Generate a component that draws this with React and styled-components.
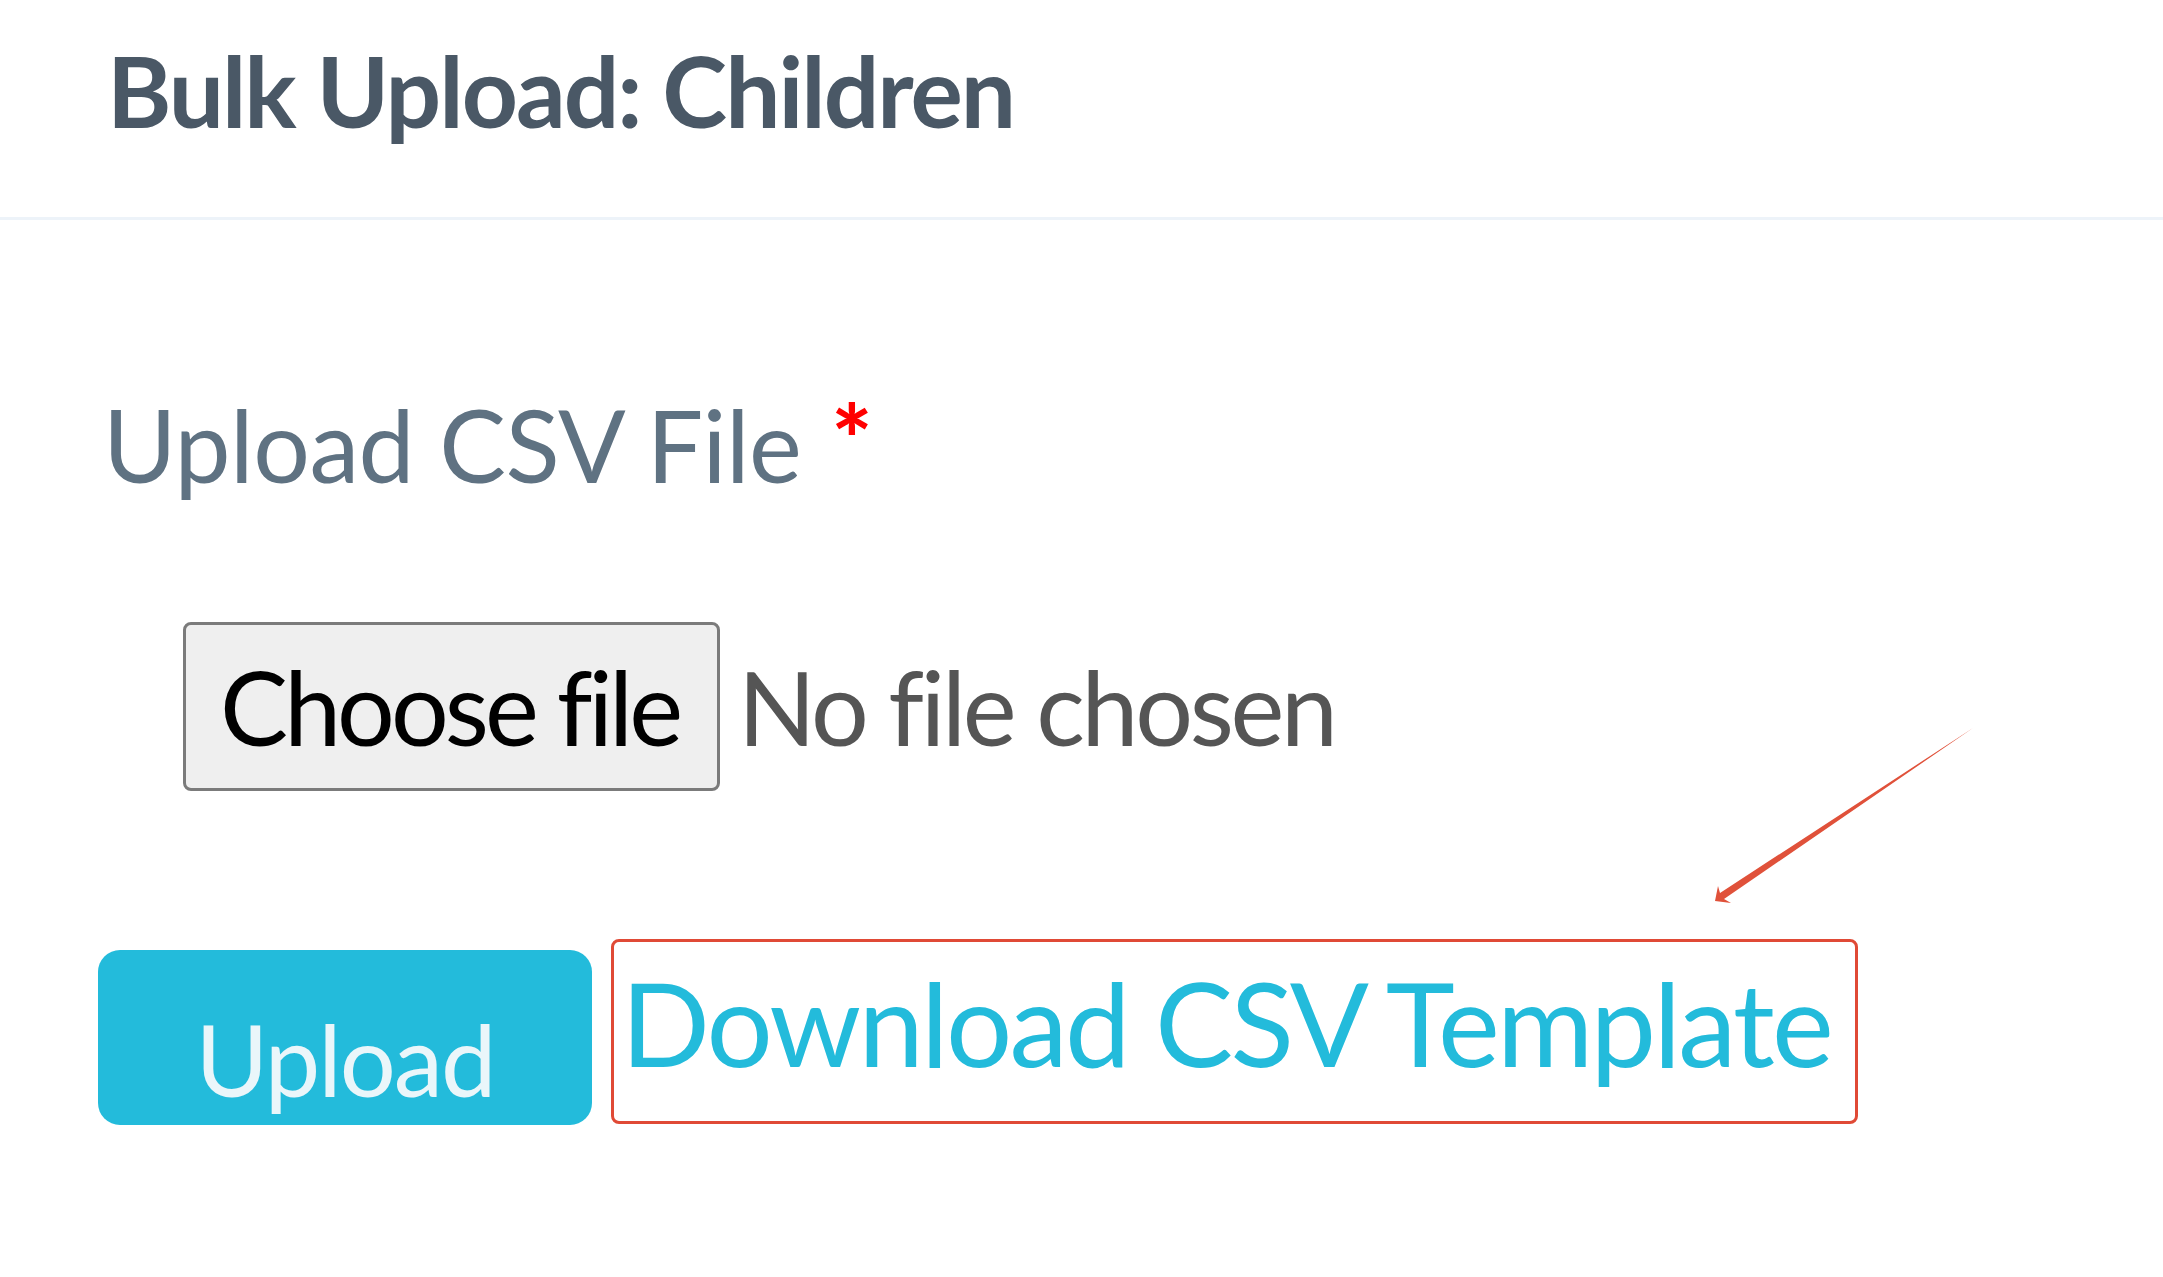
import styled, { createGlobalStyle } from "styled-components";

const GlobalStyle = createGlobalStyle`
body {
  margin: 0;
  background: #ffffff;
  font-family: Lato, "Open Sans", sans-serif;
}
`;

const Page = styled.div`
position: relative;
min-height: 1277px;
background: #ffffff;
`;

const Header = styled.header`
height: 220px;
box-sizing: border-box;
padding: 41px 0 0 107px;
border-bottom: 3px solid #edf3f9;
`;

const Title = styled.h1`
margin: 0;
font-family: Lato, sans-serif;
font-weight: 700;
font-size: 98px;
line-height: 98px;
letter-spacing: -2px;
color: #4a5866;
`;

const Body = styled.section`
padding: 174px 0 0 98px;
display: flex;
flex-direction: column;
`;

const Label = styled.div`
padding-left: 5px;
font-size: 100px;
line-height: 100px;
color: #5f7282;
letter-spacing: -0.5px;
`;

const Required = styled.span`
color: #ff0000;
font-size: 96px;
line-height: 100px;
font-weight: 900;
margin-left: 30px;
position: relative;
top: -8px;
`;

const FileRow = styled.div`
margin-top: 126px;
padding-left: 85px;
display: flex;
align-items: center;
gap: 18px;
`;

const ChooseButton = styled.div`
height: 169px;
box-sizing: border-box;
padding: 0 38px 0 34px;
display: flex;
align-items: center;
background: #efefef;
border: 3px solid #7b7b7b;
border-radius: 8px;
color: #000000;
font-size: 102px;
line-height: 102px;
letter-spacing: -4px;
`;

const FileName = styled.span`
color: #555555;
font-size: 102px;
line-height: 102px;
letter-spacing: -3.3px;
`;

const Actions = styled.div`
margin-top: 148px;
display: flex;
align-items: flex-start;
gap: 19px;
`;

const UploadButton = styled.button`
margin-top: 11px;
width: 494px;
height: 175px;
box-sizing: border-box;
padding: 59px 0 0 0;
border: none;
border-radius: 22px;
background: #23bbdb;
color: #eaf6fa;
font-family: Lato, sans-serif;
font-size: 99px;
line-height: 99px;
letter-spacing: -2px;
display: flex;
justify-content: center;
align-items: flex-start;
`;

const TemplateLink = styled.a`
display: block;
padding: 22px 24px 40px 7px;
border: 3px solid #e04a36;
border-radius: 8px;
color: #23bbdb;
font-size: 117px;
line-height: 117px;
letter-spacing: -2.7px;
text-decoration: none;
`;

const Annotation = styled.svg`
position: absolute;
left: 0;
top: 0;
width: 2163px;
height: 1277px;
pointer-events: none;
`;

export default function App() {
  return (
    <>
      <GlobalStyle />
      <Page>
        <Header>
          <Title>Bulk Upload: Children</Title>
        </Header>
        <Body>
          <Label>
            Upload CSV File<Required>*</Required>
          </Label>
          <FileRow>
            <ChooseButton>Choose file</ChooseButton>
            <FileName>No file chosen</FileName>
          </FileRow>
          <Actions>
            <UploadButton>Upload</UploadButton>
            <TemplateLink href="#">Download CSV Template</TemplateLink>
          </Actions>
        </Body>
        <Annotation viewBox="0 0 2163 1277">
          <polygon
            points="1973,728 1720,893 1718,886 1715,901 1731,903 1724,899"
            fill="#e0513a"
          />
        </Annotation>
      </Page>
    </>
  );
}
